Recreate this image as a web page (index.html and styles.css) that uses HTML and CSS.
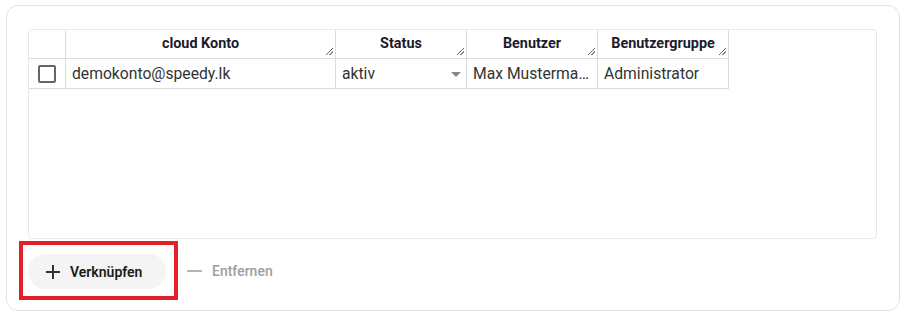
FILE: index.html
```html
<!DOCTYPE html>
<html lang="de">
<head>
  <meta charset="UTF-8" />
  <title>Cloud Konten</title>
  <link rel="stylesheet" href="styles.css">
</head>
<body>
  <div class="card">
    <div class="grid">
      <div class="row head">
        <div class="cell"></div>
        <div class="cell">cloud Konto<span class="resize"></span></div>
        <div class="cell">Status<span class="resize"></span></div>
        <div class="cell">Benutzer<span class="resize"></span></div>
        <div class="cell">Benutzergruppe<span class="resize"></span></div>
      </div>
      <div class="row data">
        <div class="cell check"><span class="box"></span></div>
        <div class="cell">demokonto@speedy.lk</div>
        <div class="cell">aktiv<span class="arrow"></span></div>
        <div class="cell">Max Mustermann</div>
        <div class="cell">Administrator</div>
      </div>
    </div>

    <div class="actions">
      <div class="highlight">
        <button class="btn primary">
          <svg width="14" height="14" viewBox="0 0 14 14"><path d="M7 0v14M0 7h14" stroke="#333" stroke-width="2"/></svg>
          Verknüpfen
        </button>
      </div>
      <button class="btn disabled">
        <svg width="15" height="14" viewBox="0 0 15 14"><path d="M0 7h15" stroke="#b5b5b5" stroke-width="2"/></svg>
        Entfernen
      </button>
    </div>
  </div>
</body>
</html>
```
FILE: styles.css
```css
body {
  margin: 0;
  font-family: Roboto, 'Liberation Sans', sans-serif;
  background: #fff;
  color: #333;
}

.card {
  margin: 5px 6px 0 6px;
  height: 306px;
  border: 1px solid #e2e2e2;
  border-radius: 12px;
  padding: 23px 22px 0 12px;
  box-sizing: border-box;
}

.grid {
  margin-left: 9px;
  height: 210px;
  border: 1px solid #e8e8e8;
  border-radius: 4px;
  box-sizing: border-box;
}

.row {
  display: grid;
  grid-template-columns: 37px 270px 131px 131px 131px;
}

.cell {
  position: relative;
  border-right: 1px solid #dcdcdc;
  border-bottom: 1px solid #dcdcdc;
  box-sizing: border-box;
  overflow: hidden;
  white-space: nowrap;
  text-overflow: ellipsis;
}

.head .cell {
  height: 29px;
  line-height: 28px;
  text-align: center;
  font-size: 14.4px;
  font-weight: bold;
  color: #1b1b2b;
}

.data .cell {
  height: 30px;
  line-height: 29px;
  font-size: 15.7px;
  padding: 0 6px;
  color: #333;
}

.resize {
  position: absolute;
  right: 2px;
  bottom: 3px;
  width: 7px;
  height: 7px;
  background: linear-gradient(135deg, transparent 45%, #666 45%, #666 55%, transparent 55%, transparent 70%, #888 70%, #888 80%, transparent 80%);
}

.data .check {
  padding: 0;
  display: flex;
  align-items: center;
  justify-content: center;
}

.box {
  width: 14px;
  height: 14px;
  border: 2px solid #666;
  border-radius: 2px;
}

.arrow {
  position: absolute;
  right: 5px;
  top: 13px;
  border-left: 5px solid transparent;
  border-right: 5px solid transparent;
  border-top: 5px solid #888;
}

.actions {
  display: flex;
  align-items: center;
  margin-top: 2px;
  gap: 9px;
}

.highlight {
  border: 4px solid #e3202a;
  padding: 9px 8px 7px 5px;
}

.btn {
  display: flex;
  align-items: center;
  gap: 10px;
  border: none;
  font-family: Roboto, 'Liberation Sans', sans-serif;
  font-size: 14px;
  font-weight: 600;
  cursor: pointer;
}

.primary {
  width: 138px;
  height: 35px;
  padding: 0 0 0 18px;
  border-radius: 18px;
  background: #f4f4f4;
  color: #1a1a1a;
}

.disabled {
  background: none;
  padding: 0;
  color: #9e9e9e;
  font-weight: 500;
}
```
